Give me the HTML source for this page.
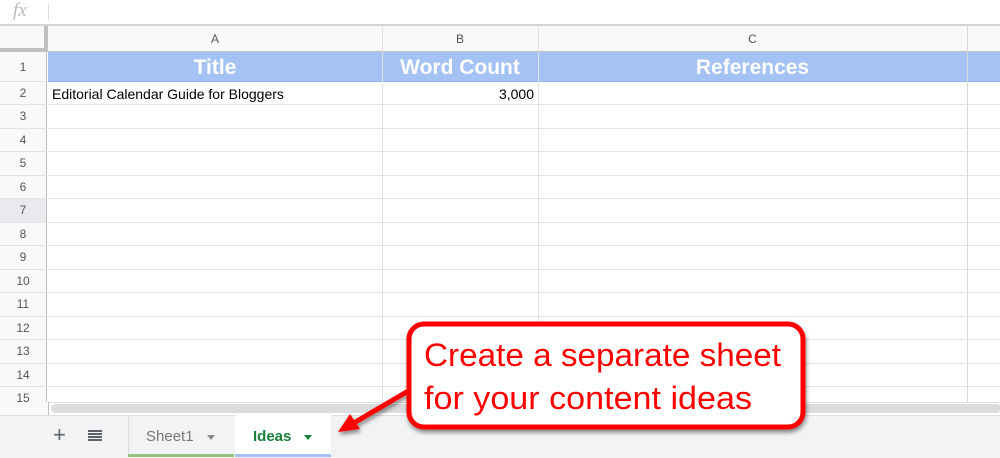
<!DOCTYPE html>
<html><head><style>
body{margin:0;width:1000px;height:457px;overflow:hidden;background:#fff;font-family:"Liberation Sans",Arial,sans-serif;position:relative}
.a{position:absolute}
.rh{position:absolute;left:0;width:47px;text-align:center;font-size:12px;color:#555;background:#f8f9fa;border-right:1px solid #c0c0c0;border-bottom:1px solid #e2e2e2;box-sizing:border-box}
.hl{position:absolute;left:48px;width:952px;height:1px;background:#e2e2e2}
.vl{position:absolute;width:1px;background:#e2e2e2;top:25px;height:377px}
</style></head><body>
<div class="a" style="left:13px;top:0;font-family:'Liberation Serif',serif;font-style:italic;font-size:19px;color:#bbb">fx</div>
<div class="a" style="left:48px;top:3px;width:1px;height:17px;background:#ddd"></div>
<div class="a" style="left:0;top:24px;width:1000px;height:2px;background:#d4d4d4"></div>
<div class="a" style="left:0;top:26px;width:1000px;height:26px;background:#f8f9fa;border-bottom:1px solid #c0c0c0;box-sizing:border-box"></div>
<div class="a" style="left:0;top:26px;width:48px;height:26px;background:#f8f9fa;border-right:4px solid #c0c0c0;border-bottom:4px solid #c0c0c0;box-sizing:border-box"></div>
<div class="a" style="left:48px;top:32px;width:334px;text-align:center;font-size:12px;color:#555">A</div>
<div class="a" style="left:382px;top:32px;width:156px;text-align:center;font-size:12px;color:#555">B</div>
<div class="a" style="left:538px;top:32px;width:429px;text-align:center;font-size:12px;color:#555">C</div>
<div class="a" style="left:48px;top:52px;width:952px;height:30px;background:#a4c2f4;border-bottom:1px solid #8fb0e8;box-sizing:border-box"></div>
<div class="vl" style="left:382px"></div><div class="vl" style="left:538px"></div><div class="vl" style="left:967px;background:#d8d8d8"></div>
<div class="a" style="left:48px;top:56px;width:334px;text-align:center;font-size:21px;font-weight:bold;color:#fff">Title</div>
<div class="a" style="left:382px;top:56px;width:156px;text-align:center;font-size:21px;font-weight:bold;color:#fff">Word Count</div>
<div class="a" style="left:538px;top:56px;width:429px;text-align:center;font-size:21px;font-weight:bold;color:#fff">References</div>
<div class="a" style="left:52px;top:86px;font-size:14px;color:#000">Editorial Calendar Guide for Bloggers</div>
<div class="a" style="left:382px;top:86px;width:152px;text-align:right;font-size:14px;color:#000">3,000</div>
<div class="rh" style="top:52px;height:30px;line-height:30px">1</div>
<div class="rh" style="top:82px;height:23px;line-height:23px">2</div>
<div class="hl" style="top:104px"></div>
<div id="rows"></div>
<script>
var h='';for(var n=3;n<=15;n++){var t=105+(n-3)*23.5;h+='<div class="rh" style="top:'+t+'px;height:23.5px;line-height:23.5px;'+(n==7?'background:#e8eaed;':'')+'">'+n+'</div><div class="hl" style="top:'+(t+22.5)+'px"></div>';}
document.getElementById('rows').innerHTML=h;
</script>
<div class="a" style="left:0;top:402px;width:1000px;height:13px;background:#fff;border-top:1px solid #e0e0e0"></div>
<div class="a" style="left:0;top:402px;width:48px;height:13px;background:#f8f9fa;border-right:1px solid #c0c0c0"></div>
<div class="a" style="left:51px;top:404px;width:950px;height:9px;border-radius:5px;background:#dadce0"></div>
<div class="a" style="left:0;top:415px;width:1000px;height:42px;background:#f1f3f4;border-top:1px solid #ddd"></div>
<div class="a" style="left:53px;top:422px;font-size:22px;color:#5f6368">+</div>
<div class="a" style="left:88px;top:430px;width:14px;height:12px;background:repeating-linear-gradient(#5f6368 0 2px,transparent 2px 3px)"></div>
<div class="a" style="left:128px;top:416px;width:106px;height:41px;background:#f1f3f4;border-right:1px solid #ddd;border-left:1px solid #ddd"></div>
<div class="a" style="left:128px;top:454px;width:106px;height:3px;background:#93c47d"></div>
<div class="a" style="left:146px;top:428px;font-size:15px;color:#777">Sheet1</div>
<div class="a" style="left:207px;top:435px;border:4px solid transparent;border-top:5px solid #888"></div>
<div class="a" style="left:235px;top:415px;width:96px;height:42px;background:#fff"></div>
<div class="a" style="left:235px;top:454px;width:96px;height:3px;background:#a4c2f4"></div>
<div class="a" style="left:253px;top:428px;font-size:15px;font-weight:bold;color:#188038">Ideas</div>
<div class="a" style="left:304px;top:435px;border:4px solid transparent;border-top:5px solid #188038"></div>
<svg class="a" style="left:0;top:0" width="1000" height="457">
<defs><filter id="s"><feDropShadow dx="1" dy="3" stdDeviation="2" flood-opacity="0.45"/></filter></defs>
<g filter="url(#s)">
<line x1="410" y1="390" x2="352" y2="424" stroke="#f00" stroke-width="5"/>
<polygon points="338,432 350,414 360,429" fill="#f00"/>
<rect x="409" y="324" width="394" height="103" rx="15" fill="#fff" stroke="#f00" stroke-width="5"/>
</g>
<text x="424" y="366" font-family="Liberation Sans" font-size="32" fill="#f00" textLength="357" lengthAdjust="spacingAndGlyphs">Create a separate sheet</text>
<text x="424" y="409" font-family="Liberation Sans" font-size="32" fill="#f00" textLength="328" lengthAdjust="spacingAndGlyphs">for your content ideas</text>
</svg>
</body></html>
